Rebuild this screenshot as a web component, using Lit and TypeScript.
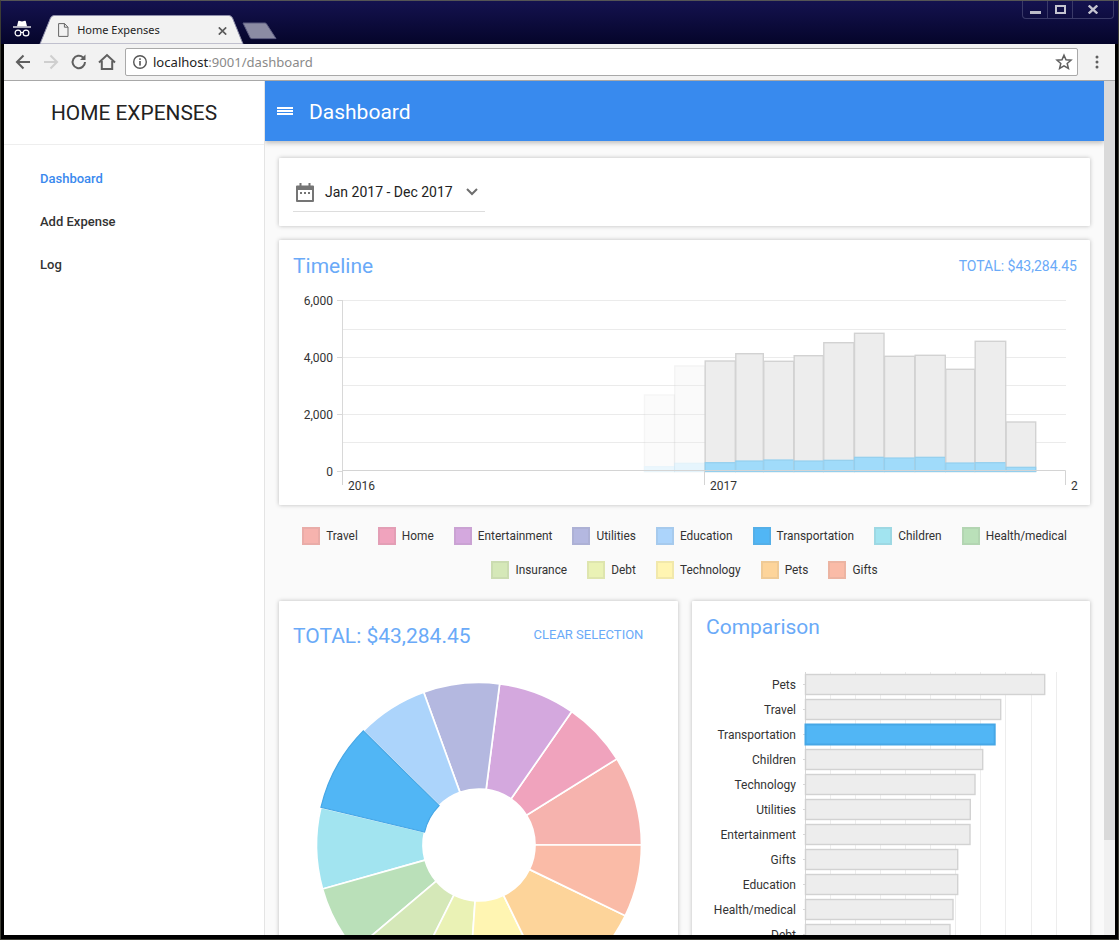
import { LitElement, html, css, svg } from "lit";
import { customElement } from "lit/decorators.js";

const C: Record<string, string> = {
  Travel: "#f6b3ae", Home: "#f0a3bd", Entertainment: "#d4a8de", Utilities: "#b4b8e0", Education: "#acd4fb",
  Transportation: "#51b6f5", Children: "#a2e4f0", "Health/medical": "#bae0b9", Insurance: "#d5e8b8", Debt: "#eaf2b5",
  Technology: "#fff5b2", Pets: "#fdd49a", Gifts: "#fabba7",
};
const pieStops: [string, number, number][] = [
  ["Travel", 0, 32], ["Home", 32, 55.2], ["Entertainment", 55.2, 82.7], ["Utilities", 82.7, 109.9],
  ["Education", 109.9, 135.4], ["Children", 166.6, 195.7], ["Health/medical", 195.7, 220.2],
  ["Insurance", 220.2, 243.4], ["Debt", 243.4, 266], ["Technology", 266, 296], ["Pets", 296, 334.2],
  ["Gifts", 334.2, 360], ["Transportation", 135.4, 166.6],
];
const bars = [
  [644, 674.3, 395, 466.7], [674.3, 704.7, 366, 463.3], [704.7, 735.3, 361, 462.7], [735.3, 763.3, 353.7, 461],
  [763.3, 793.7, 361.3, 460], [793.7, 823.3, 355.7, 461], [823.3, 854, 342.7, 460.3], [854, 884, 333.3, 457.3],
  [884, 914.7, 356.3, 458], [914.7, 945.3, 355.3, 457.3], [945.3, 974.7, 369.3, 463], [974.7, 1005.7, 341.3, 462.7],
  [1005.7, 1035.7, 422, 467.3],
];
const hbars: [string, number][] = [
  ["Pets", 1044.7], ["Travel", 1000.7], ["Transportation", 994.7], ["Children", 982.7], ["Technology", 975],
  ["Utilities", 970.3], ["Entertainment", 970], ["Gifts", 957.7], ["Education", 957.7], ["Health/medical", 953], ["Debt", 950],
];
const row1 = ["Travel", "Home", "Entertainment", "Utilities", "Education", "Transportation", "Children", "Health/medical"];
const row2 = ["Insurance", "Debt", "Technology", "Pets", "Gifts"];

function slice(a0: number, a1: number) {
  const R = 162.5, r = 56;
  const p = (rad: number, a: number) => {
    const t = (a * Math.PI) / 180;
    return `${(170 + rad * Math.cos(t)).toFixed(2)} ${(170 - rad * Math.sin(t)).toFixed(2)}`;
  };
  const lg = a1 - a0 > 180 ? 1 : 0;
  return `M${p(r, a0)} L${p(R, a0)} A${R} ${R} 0 ${lg} 0 ${p(R, a1)} L${p(r, a1)} A${r} ${r} 0 ${lg} 1 ${p(r, a0)} Z`;
}

@customElement("app-root")
export class AppRoot extends LitElement {
  static styles = css`
    :host { display: block; width: 1119px; height: 940px; background: #000; font-family: Roboto, "Liberation Sans", sans-serif; overflow: hidden; }
    * { box-sizing: border-box; }
    .win { width: 1119px; height: 940px; background: #000; border: 1px solid #3c3c34; border-top-color: #555; display: flex; flex-direction: column; }
    .tabs { height: 43px; padding-left: 11.5px; flex: none; display: flex; align-items: flex-end; background: linear-gradient(#14124f, #05052a); position: relative; }
    .incog { width: 18px; height: 18px; margin-bottom: 6.5px; flex: none; }
    .tab { position: relative; width: 205px; height: 29px; margin-left: 8.5px; flex: none; display: flex; align-items: center; color: #222; }
    .tab svg.shape { position: absolute; inset: 0; }
    .tab .lbl { position: relative; margin-left: 38.2px; font-family: "Noto Sans", Roboto, sans-serif; font-size: 11px; }
    .tab .doc { position: absolute; left: 19px; top: 8px; }
    .tab .x { position: absolute; left: 178.5px; top: 11.5px; }
    .newtab { margin-left: -2px; margin-bottom: 4px; flex: none; }
    .ctl { position: absolute; left: 1021px; top: 0; width: 92px; height: 18px; display: flex; border: 1px solid #3a3a68; border-top: none; border-radius: 0 0 4px 4px; }
    .ctl span { display: flex; align-items: center; justify-content: center; border-right: 1px solid #3a3a68; }
    .ctl span:last-child { border-right: none; }
    .c1, .c2 { width: 25px; }
    .c3 { flex: 1; }
    .bar { height: 37px; flex: none; margin: 0 3px; background: #f2f2f2; border-bottom: 1px solid #a8a8a8; display: flex; align-items: center; position: relative; }
    .nav { width: 20px; height: 20px; margin-left: 8px; flex: none; }
    .nav.first { margin-left: 9px; }
    .url { position: absolute; left: 121px; top: 4px; width: 953px; height: 28px; background: #fff; border: 1px solid #a9a9a9; border-radius: 2px; display: flex; align-items: center; font-family: "Noto Sans", Roboto, sans-serif; font-size: 13.08px; color: #222; }
    .url .info { margin: 0 5px 0 6px; flex: none; }
    .url .dim { color: #8a8a8a; }
    .url .star { position: absolute; right: 4px; top: 4px; }
    .dots { position: absolute; left: 1090.6px; top: 11px; }
    .body { height: 854px; flex: none; margin: 0 3px; background: #fff; display: flex; overflow: hidden; }
    .side { width: 261px; flex: none; background: #fff; border-right: 1px solid #e4e4e4; }
    .brand { height: 64px; padding-top: 1px; border-bottom: 1px solid #eee; display: flex; align-items: center; justify-content: center; font-size: 20.9px; color: #222; }
    .menu { padding-top: 12px; }
    .item { height: 43px; padding-left: 36px; display: flex; align-items: center; font-size: 13px; font-weight: 500; color: #333; }
    .item.on { color: #3a89ee; }
    .main { width: 839px; flex: none; background: #fafafa; display: flex; flex-direction: column; overflow: hidden; }
    .head { height: 60px; flex: none; background: #388aee; box-shadow: 0 2px 5px rgba(0,0,0,.25); display: flex; align-items: center; padding: 1px 0 0 12px; color: #fff; font-size: 21px; position: relative; }
    .burger { display: flex; flex-direction: column; gap: 1px; width: 16px; margin: -2px 16px 0 0; }
    .burger i { height: 2px; background: #fff; display: block; }
    .content { padding: 17px 14px 0; display: flex; flex-direction: column; }
    .card { background: #fff; box-shadow: 0 0 4px rgba(0,0,0,.25); border-radius: 1px; }
    .date { height: 68px; padding: 19px 14px 0; margin-bottom: 14px; }
    .picker { width: 192px; height: 35px; border-bottom: 1px solid #ddd; display: flex; align-items: center; padding: 0 0 4px 2px; font-size: 14px; color: #222; }
    .cal { margin-right: 10px; }
    .chev { margin-left: 11px; }
    .tl { height: 265px; position: relative; }
    .tlhead { display: flex; justify-content: space-between; align-items: center; padding: 14px 13px 0 14px; color: #6aaaf8; }
    .title { font-size: 21px; color: #6aaaf8; }
    .sum { font-size: 14px; }
    .tl svg.c { position: absolute; left: 0; top: 0; }
    svg text { font-family: Roboto, "Liberation Sans", sans-serif; font-size: 12px; fill: #333; }
    .legend { height: 96px; padding-top: 14px; display: flex; flex-direction: column; align-items: center; }
    .lrow { height: 34px; display: flex; align-items: center; gap: 20.1px; font-size: 11.85px; color: #333; }
    .li { display: flex; align-items: center; gap: 6px; }
    .sw { width: 18px; height: 18px; border: 2px solid rgba(120,120,120,.1); display: block; }
    .cols { display: flex; gap: 14px; height: 400px; }
    .pie { width: 399px; flex: none; height: 400px; position: relative; }
    .cmp { width: 398px; flex: none; height: 400px; position: relative; }
    .piehead { display: flex; align-items: center; padding: 16px 0 0 14px; height: 53px; color: #6aaaf8; font-size: 21px; }
    .clear { margin-left: 63px; margin-top: -3px; font-size: 13px; }
    .pie svg { position: absolute; left: 29.5px; top: 74px; }
    .cmph { padding: 14px 0 0 14px; font-size: 21px; color: #6aaaf8; position: relative; z-index: 1; }
    .cmp svg { position: absolute; left: 0; top: 0; }
    .scroll { width: 11px; flex: none; background: #f1f1f1; }
    .thumb { height: 759px; background: #dadada; }
  `;

  private legendItem(n: string) {
    return html`<span class="li"><span class="sw" style="background:${C[n]}"></span>${n}</span>`;
  }

  render() {
    const gy = [300, 329, 357, 385, 414, 442];
    return html`
      <div class="win">
        <div class="tabs">
          <svg class="incog" viewBox="0 0 18 18" fill="none">
            <path d="M4 6.2 L5.2 1.2 Q5.4.6 6 .8 L9 1.4 L12 .8 Q12.6.6 12.8 1.2 L14 6.2z" fill="#fff"/>
            <path d="M0 7h18" stroke="#fff" stroke-width="1.3"/>
            <circle cx="5" cy="13" r="2.9" stroke="#fff" stroke-width="1.2"/>
            <circle cx="13" cy="13" r="2.9" stroke="#fff" stroke-width="1.2"/>
            <path d="M7.8 12.5h2.4" stroke="#fff" stroke-width="1"/>
          </svg>
          <div class="tab">
            <svg class="shape" width="205" height="29" viewBox="0 0 205 29">
              <path d="M1 29 L11.5 3 Q12.7 .5 15 .5 H190 Q192.3 .5 193.5 3 L204 29Z" fill="#f2f2f2" stroke="#8e8eaa" stroke-width="1"/>
            </svg>
            <svg class="doc" width="10.5" height="14" viewBox="0 0 10.5 14" fill="none">
              <path d="M.6 .6h6l3.4 3.6v9.2H.6z M6.4 .6v3.6H10" stroke="#666" stroke-width="1"/>
            </svg>
            <span class="lbl">Home Expenses</span>
            <svg class="x" width="9" height="8" viewBox="0 0 9 8"><path d="M.8.4l7.4 7.2M8.2.4L.8 7.6" stroke="#5a5a5a" stroke-width="1.7"/></svg>
          </div>
          <svg class="newtab" width="36" height="18" viewBox="0 0 36 18">
            <path d="M1 1h22q1 0 1.6 1L34 16.6H9.5q-1 0-1.4-1z" fill="#8b8ba3" stroke="#5c5c80" stroke-width="1"/>
          </svg>
          <div class="ctl">
            <span class="c1"><svg width="11" height="10"><rect x="0" y="6" width="11" height="3" fill="#bdbdc9"/></svg></span>
            <span class="c2"><svg width="11" height="9"><rect x="1" y="1" width="9" height="7" fill="none" stroke="#c4c4d0" stroke-width="2"/></svg></span>
            <span class="c3"><svg width="10" height="9"><path d="M.7.5l8.6 8M9.3.5L.7 8.5" stroke="#c4c4d0" stroke-width="2.3"/></svg></span>
          </div>
        </div>
        <div class="bar">
          <svg class="nav first" viewBox="0 0 20 20"><path d="M17 10H4.5M10.5 3.5L4 10l6.5 6.5" fill="none" stroke="#5f5f5f" stroke-width="2.1"/></svg>
          <svg class="nav" viewBox="0 0 20 20"><path d="M3 10h12.5M9.5 3.5L16 10l-6.5 6.5" fill="none" stroke="#cfcfcf" stroke-width="2.1"/></svg>
          <svg class="nav" viewBox="0 0 20 20"><path d="M16 10a6.2 6.2 0 1 1-1.9-4.5" fill="none" stroke="#5f5f5f" stroke-width="2"/><path d="M16.5 2.5v5.5H11z" fill="#5f5f5f"/></svg>
          <svg class="nav" viewBox="0 0 20 20"><path d="M2 10.5L10 3l8 7.5M4.8 9v8h10.4V9" fill="none" stroke="#5f5f5f" stroke-width="2"/></svg>
          <div class="url">
            <svg class="info" width="16" height="16" viewBox="0 0 16 16"><circle cx="8" cy="8" r="6.3" fill="none" stroke="#555" stroke-width="1.4"/><rect x="7.2" y="7" width="1.6" height="4.6" fill="#555"/><rect x="7.2" y="4.3" width="1.6" height="1.6" fill="#555"/></svg>
            <span>localhost<span class="dim">:9001/dashboard</span></span>
            <svg class="star" width="18" height="18" viewBox="0 0 18 18"><path d="M9 2.2l2 4.6 5 .4-3.8 3.3 1.2 4.9L9 12.8l-4.4 2.6 1.2-4.9L2 7.2l5-.4z" fill="none" stroke="#5f5f5f" stroke-width="1.5"/></svg>
          </div>
          <svg class="dots" width="4" height="14" viewBox="0 0 4 14"><circle cx="2" cy="2" r="1.5" fill="#5f5f5f"/><circle cx="2" cy="7" r="1.5" fill="#5f5f5f"/><circle cx="2" cy="12" r="1.5" fill="#5f5f5f"/></svg>
        </div>
        <div class="body">
          <div class="side">
            <div class="brand">HOME EXPENSES</div>
            <div class="menu"><div class="item on">Dashboard</div><div class="item">Add Expense</div><div class="item">Log</div></div>
          </div>
          <div class="main">
            <div class="head"><span class="burger"><i></i><i></i><i></i></span>Dashboard</div>
            <div class="content">
              <div class="card date">
                <div class="picker">
                  <svg class="cal" width="20" height="20" viewBox="0 0 20 20"><path d="M2 3.5h16a1 1 0 0 1 1 1V19a1 1 0 0 1-1 1H2a1 1 0 0 1-1-1V4.500a1 1 0 0 1 1-1z" fill="#757575"/><rect x="4.500" y="1" width="2" height="3" fill="#757575"/><rect x="13.5" y="1" width="2" height="3" fill="#757575"/><rect x="3" y="8" width="14" height="10" fill="#fff"/><rect x="5" y="10" width="2" height="2" fill="#757575"/><rect x="9" y="10" width="2" height="2" fill="#757575"/><rect x="13" y="10" width="2" height="2" fill="#757575"/></svg>
                  <span>Jan 2017 - Dec 2017</span>
                  <svg class="chev" width="16" height="10" viewBox="0 0 16 10"><path d="M3 2l5 5 5-5" fill="none" stroke="#6e6e6e" stroke-width="2"/></svg>
                </div>
              </div>
              <div class="card tl">
                <div class="tlhead"><span class="title">Timeline</span><span class="sum">TOTAL: $43,284.45</span></div>
                <svg class="c" width="811" height="265" viewBox="279 240 811 265">
                  ${gy.map((y) => svg`<line x1="342" x2="1066" y1=${y + 0.5} y2=${y + 0.5} stroke="#ebebeb"/>`)}
                  <line x1="342.5" x2="342.5" y1="300" y2="471" stroke="#d8d8d8"/>
                  ${[[6000, 300], [4000, 357], [2000, 414], [0, 471]].map(([v, y]) => svg`<line x1="337" x2="342" y1=${y + 0.5} y2=${y + 0.5} stroke="#d8d8d8"/><text x="333" y=${y + 5} text-anchor="end">${v.toLocaleString("en-US")}</text>`)}
                  ${bars.map((b, i) => {
                    const op = i === 0 ? 0.2 : i === 1 ? 0.25 : 1;
                    return svg`<g opacity=${op}>
                      <rect x=${b[0] + 0.5} y=${b[2]} width=${b[1] - b[0] - 0.5} height=${471.5 - b[2]} fill="#ededed" stroke="#d2d2d2" stroke-width="1.4"/>
                      <rect x=${b[0] + 0.5} y=${b[3]} width=${b[1] - b[0] - 0.5} height=${471.5 - b[3]} fill="#a0dbfa" stroke="#93cfee" stroke-width="1.2"/>
                    </g>`;
                  })}
                  <path d="M342 470.5H1065.5V485M342.5 470.5V485M704.5 470.5V485" fill="none" stroke="#d4d4d4"/>
                  <text x="348" y="490">2016</text>
                  <text x="710" y="490">2017</text>
                  <text x="1071" y="490">2</text>
                </svg>
              </div>
              <div class="legend">
                <div class="lrow">${row1.map((n) => this.legendItem(n))}</div>
                <div class="lrow">${row2.map((n) => this.legendItem(n))}</div>
              </div>
              <div class="cols">
                <div class="card pie">
                  <div class="piehead"><span>TOTAL: $43,284.45</span><span class="clear">CLEAR SELECTION</span></div>
                  <svg width="340" height="340" viewBox="0 0 340 340">
                    ${pieStops.map(([n, a, b]) => n === "Transportation"
                      ? svg`<path d=${slice(a, b)} fill=${C[n]} stroke="#46a7e6" stroke-width="1.2"/>`
                      : svg`<path d=${slice(a, b)} fill=${C[n]} stroke="#fff" stroke-width="1.7"/>`)}
                  </svg>
                </div>
                <div class="card cmp">
                  <div class="cmph">Comparison</div>
                  <svg width="398" height="400" viewBox="692 601 398 400">
                    ${[830.5, 855.5, 880.5, 905.5, 930.5, 955.5, 980.5, 1005.5, 1031.5, 1056.5].map((x) => svg`<line x1=${x} x2=${x} y1="672" y2="1000" stroke="#ededed"/>`)}
                    <line x1="805.5" x2="805.5" y1="672" y2="1000" stroke="#d8d8d8"/>
                    ${hbars.map(([n, r], i) => {
                      const y = 674.5 + i * 25;
                      const on = n === "Transportation";
                      return svg`<line x1="803" x2="805" y1=${y + 10} y2=${y + 10} stroke="#d8d8d8"/>
                        <text x="796" y=${y + 14} text-anchor="end">${n}</text>
                        <rect x="805.5" y=${y} width=${r - 805.5} height="20" fill=${on ? C.Transportation : "#ededed"} stroke=${on ? "#46a7e6" : "#d2d2d2"} stroke-width=${on ? 2 : 1.4}/>`;
                    })}
                  </svg>
                </div>
              </div>
            </div>
          </div>
          <div class="scroll"><div class="thumb"></div></div>
        </div>
      </div>
    `;
  }
}
